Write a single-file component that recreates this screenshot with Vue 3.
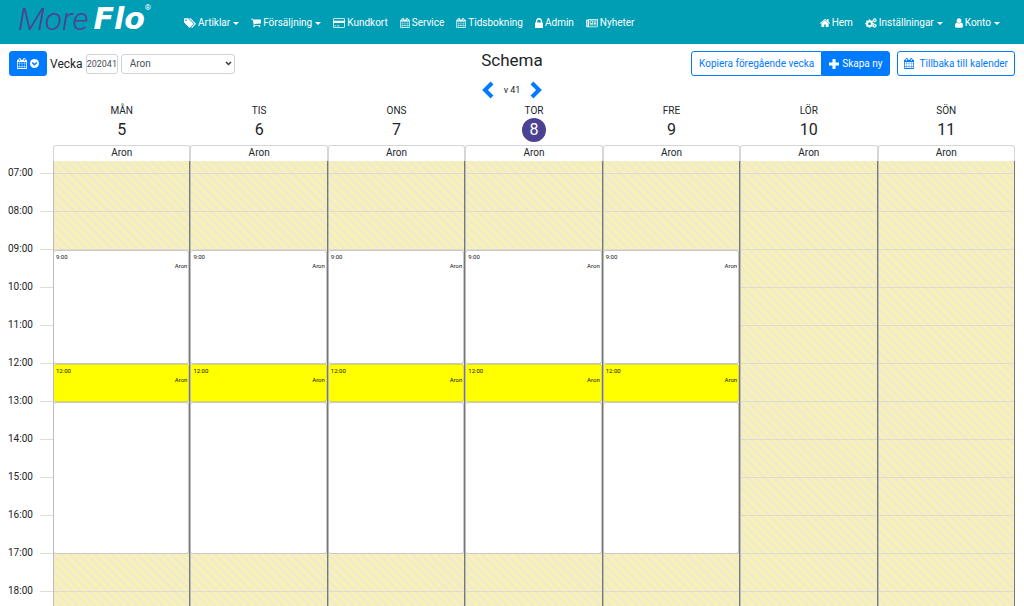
<script setup>
import { ref } from 'vue'

const icons = {
  tags: { box: '0 128 1920 1536', w: 12, d: 'M448 448q0-53-37.5-90.5t-90.5-37.5-90.5 37.5-37.5 90.5 37.5 90.5 90.5 37.5 90.5-37.5 37.5-90.5zm1067 576q0 53-37 90l-491 492q-39 37-91 37-53 0-90-37l-715-716q-38-37-64.5-101t-26.5-117v-416q0-52 38-90t90-38h416q53 0 117 26.5t102 64.5l715 714q37 39 37 91zm384 0q0 53-37 90l-491 492q-39 37-91 37-36 0-59-14t-53-45l470-470q37-37 37-90 0-52-37-91l-715-714q-38-38-102-64.5t-117-26.5h224q53 0 117 26.5t102 64.5l715 714q37 39 37 91z' },
  cart: { box: '64 256 1664 1408', w: 10, d: 'M704 1536q0 52-38 90t-90 38-90-38-38-90 38-90 90-38 90 38 38 90zm896 0q0 52-38 90t-90 38-90-38-38-90 38-90 90-38 90 38 38 90zm128-1088v512q0 24-16.5 42.5t-40.5 21.5l-1044 122q13 60 13 70 0 16-24 64h920q26 0 45 19t19 45-19 45-45 19h-1024q-26 0-45-19t-19-45q0-11 8-31.5t16-36 21.5-40 15.5-29.5l-177-823h-204q-26 0-45-19t-19-45 19-45 45-19h256q16 0 28.5 6.5t19.5 15.5 13 24.5 8 26 5.5 29.5 4.5 26h1201q26 0 45 19t19 45z' },
  card: { box: '0 0 1920 1536', w: 12, d: 'M160 0H1760Q1920 0 1920 160V1376Q1920 1536 1760 1536H160Q0 1536 0 1376V160Q0 0 160 0zM160 128Q128 128 128 160V400H1792V160Q1792 128 1760 128zM128 768V1376Q128 1408 160 1408H1760Q1792 1408 1792 1376V768zM256 1152H512V1280H256zM640 1152H1024V1280H640z' },
  calendar: { box: '64 0 1664 1792', w: 10, d: 'M192 1664h288v-288h-288v288zm352 0h320v-288h-320v288zm-352-352h288v-320h-288v320zm352 0h320v-320h-320v320zm-352-384h288v-288h-288v288zm736 736h320v-288h-320v288zm-384-736h320v-288h-320v288zm768 736h288v-288h-288v288zm-384-352h320v-320h-320v320zm-352-864v-288q0-13-9.5-22.5t-22.5-9.5h-64q-13 0-22.5 9.5t-9.5 22.5v288q0 13 9.5 22.5t22.5 9.5h64q13 0 22.5-9.5t9.5-22.5zm736 864h288v-320h-288v320zm-384-384h320v-288h-320v288zm384 0h288v-288h-288v288zm32-480v-288q0-13-9.5-22.5t-22.5-9.5h-64q-13 0-22.5 9.5t-9.5 22.5v288q0 13 9.5 22.5t22.5 9.5h64q13 0 22.5-9.5t9.5-22.5zm384-64v1280q0 52-38 90t-90 38h-1408q-52 0-90-38t-38-90v-1280q0-52 38-90t90-38h128v-96q0-66 47-113t113-47h64q66 0 113 47t47 113v96h384v-96q0-66 47-113t113-47h64q66 0 113 47t47 113v96h128q52 0 90 38t38 90z' },
  lock: { box: '320 128 1152 1408', w: 8, d: 'M640 768h512v-192q0-106-75-181t-181-75-181 75-75 181v192zm832 96v576q0 40-28 68t-68 28h-960q-40 0-68-28t-28-68v-576q0-40 28-68t68-28h32v-192q0-184 132-316t316-132 316 132 132 316v192h32q40 0 68 28t28 68z' },
  news: { box: '0 0 2048 1408', w: 12, d: 'M384 0H2048V1216Q2048 1408 1856 1408H192Q0 1408 0 1216V128H384zM512 128V1216L490 1280H1856Q1920 1280 1920 1216V128zM128 256V1216Q128 1280 192 1280T256 1216V256zM640 256H1216V832H640zM768 384V704H1088V384zM1312 256H1792V384H1312zM1312 480H1792V608H1312zM1312 704H1792V832H1312zM640 960H1216V1088H640zM1312 960H1792V1088H1312z' },
  home: { box: '90 256 1612 1280', w: 10, d: 'M1472 992v480q0 26-19 45t-45 19h-384v-384h-256v384h-384q-26 0-45-19t-19-45v-480q0-1 .5-3t.5-3l575-474 575 474q1 2 1 6zm223-69l-62 74q-8 9-21 11h-3q-13 0-21-7l-692-577-692 577q-12 8-24 7-13-2-21-11l-62-74q-8-10-7-23.5t11-21.5l719-599q32-26 76-26t76 26l244 204v-195q0-14 9-23t23-9h192q14 0 23 9t9 23v408l219 182q10 8 11 21.5t-7 23.5z' },
  cogs: { box: '-1 0 23 20', w: 12, d: 'M6 3H9L9.5 5L11 5.700L13 4.700L14.500 6.500L13.500 8.300L14 9.500L16 10V12.500L14 13L13.300 14.500L14.400 16.200L12.500 18L10.800 17L9.500 17.500L9 19.500H6.200L5.600 17.500L4.300 17L2.500 18L.6 16.200L1.700 14.400L1 13L-1 12.500V10L1 9.500L1.700 8L.6 6.300L2.500 4.500L4.300 5.600L5.500 5zM7.500 8.300A3 3 0 1 0 7.500 14.300A3 3 0 1 0 7.500 8.300zM17 0L18 1.300L20 .7L20.800 2.500L22 4.500L21 7L19.500 7.600L18 9L16.500 7.600L14.600 7L14 4.500L15 2.500L15.500 1zM18 3A1.500 1.500 0 1 0 18 6A1.500 1.500 0 1 0 18 3zM18 11L19.500 12.400L21.400 13L22 15.500L21 17.500L19.500 18.600L18 20L16.500 18.600L14.600 18L14 15.500L15 13.500L16.500 12.400zM18 14A1.500 1.500 0 1 0 18 17A1.500 1.500 0 1 0 18 14z' },
  user: { box: '256 128 1280 1536', w: 8, d: 'M1536 1399q0 109-62.5 187t-150.5 78h-854q-88 0-150.5-78t-62.5-187q0-85 8.5-160.5t31.5-152 58.500-131 94-89 134.500-34.500q131 128 313 128t313-128q76 0 134.500 34.500t94 89 58.500 131 31.500 152 8.500 160.500zm-256-887q0 159-112.500 271.500t-271.500 112.500-271.500-112.500-112.500-271.500 112.500-271.500 271.500-112.500 271.500 112.500 112.500 271.500z' },
}

const mainLinks = [
  { text: 'Artiklar', icon: 'tags', menu: true },
  { text: 'Försäljning', icon: 'cart', menu: true },
  { text: 'Kundkort', icon: 'card' },
  { text: 'Service', icon: 'calendar' },
  { text: 'Tidsbokning', icon: 'calendar' },
  { text: 'Admin', icon: 'lock' },
  { text: 'Nyheter', icon: 'news' },
]
const userLinks = [
  { text: 'Hem', icon: 'home' },
  { text: 'Inställningar', icon: 'cogs', menu: true },
  { text: 'Konto', icon: 'user', menu: true },
]

const week = ref('202041')
const person = ref('Aron')

const shifts = [
  { time: '9:00', kind: 'work', rows: 'r9' },
  { time: '12:00', kind: 'lunch', rows: 'r12' },
  { time: '', kind: 'work', rows: 'r13' },
]
const days = [
  { name: 'MÅN', date: 5, shifts },
  { name: 'TIS', date: 6, shifts },
  { name: 'ONS', date: 7, shifts },
  { name: 'TOR', date: 8, shifts, today: true },
  { name: 'FRE', date: 9, shifts },
  { name: 'LÖR', date: 10, shifts: [] },
  { name: 'SÖN', date: 11, shifts: [] },
]
const hours = Array.from({ length: 12 }, (_, i) => String(i + 7).padStart(2, '0') + ':00')
</script>

<template>
  <div class="page">
    <header class="topbar">
      <a class="logo" href="#" aria-label="MoreFlo"><span class="more">More</span><span class="flo">Flo</span><sup>®</sup></a>
      <nav class="links">
        <a v-for="l in mainLinks" :key="l.text" href="#">
          <svg :width="icons[l.icon].w" height="10" :viewBox="icons[l.icon].box"><path fill="currentColor" fill-rule="evenodd" :d="icons[l.icon].d" /></svg>
          {{ l.text }}<i v-if="l.menu" class="caret"></i>
        </a>
      </nav>
      <nav class="links right">
        <a v-for="l in userLinks" :key="l.text" href="#">
          <svg :width="icons[l.icon].w" height="10" :viewBox="icons[l.icon].box"><path fill="currentColor" fill-rule="evenodd" :d="icons[l.icon].d" /></svg>
          {{ l.text }}<i v-if="l.menu" class="caret"></i>
        </a>
      </nav>
    </header>

    <section class="toolbar">
      <div class="filters">
        <button class="btn solid pick" type="button" aria-label="Välj vecka">
          <svg width="10" height="11" :viewBox="icons.calendar.box"><path fill="currentColor" fill-rule="evenodd" :d="icons.calendar.d" /></svg>
          <svg width="9" height="9" viewBox="0 0 18 18"><circle cx="9" cy="9" r="9" fill="#fff" /><path d="M4.500 7L9 11.500L13.500 7" fill="none" stroke="#007bff" stroke-width="3" /></svg>
        </button>
        <label class="week-label" for="week">Vecka</label>
        <input id="week" v-model="week" class="field week" type="text" />
        <span class="select-wrap">
          <select v-model="person" class="field" aria-label="Person">
            <option>Aron</option>
          </select>
          <svg class="arrow" width="7" height="5" viewBox="0 0 7 5"><path d="M1 1L3.500 3.500L6 1" fill="none" stroke="#343a40" stroke-width="1.500" /></svg>
        </span>
      </div>
      <div class="heading">
        <h1>Schema</h1>
        <div class="stepper">
          <button type="button" aria-label="Föregående vecka"><svg width="12" height="18" viewBox="0 0 12 18"><path d="M10 2L3 9L10 16" fill="none" stroke="#007bff" stroke-width="4" /></svg></button>
          <span>v 41</span>
          <button type="button" aria-label="Nästa vecka"><svg width="12" height="18" viewBox="0 0 12 18"><path d="M2 2L9 9L2 16" fill="none" stroke="#007bff" stroke-width="4" /></svg></button>
        </div>
      </div>
      <div class="actions">
        <div class="group">
          <button class="btn outline" type="button">Kopiera föregående vecka</button>
          <button class="btn solid" type="button">
            <svg width="10" height="10" viewBox="0 0 10 10"><path d="M5 0V10M0 5H10" stroke="#fff" stroke-width="3" /></svg>
            Skapa ny
          </button>
        </div>
        <a class="btn outline back" href="#">
          <svg width="10" height="11" :viewBox="icons.calendar.box"><path fill="currentColor" fill-rule="evenodd" :d="icons.calendar.d" /></svg>
          Tillbaka till kalender
        </a>
      </div>
    </section>

    <main class="calendar">
      <ol class="hours">
        <li v-for="h in hours" :key="h">{{ h }}</li>
      </ol>
      <section v-for="d in days" :key="d.name" class="day">
        <h2>{{ d.name }}</h2>
        <div class="date"><span :class="{ today: d.today }">{{ d.date }}</span></div>
        <div class="who">Aron</div>
        <div class="slots">
          <article v-for="s in d.shifts" :key="s.rows" class="shift" :class="[s.kind, s.rows]">
            <template v-if="s.time">
              <time>{{ s.time }}</time>
              <p>Aron</p>
            </template>
          </article>
        </div>
      </section>
    </main>
  </div>
</template>

<style>
body {
  margin: 0;
  background: #fff;
}
</style>

<style scoped>
* {
  box-sizing: border-box;
}
.page {
  height: 100vh;
  overflow: hidden;
  display: flex;
  flex-direction: column;
  font-family: Roboto, "Noto Sans", sans-serif;
  font-size: 10px;
  color: #212529;
}
button,
input,
select {
  font: inherit;
  margin: 0;
}
.topbar {
  flex: none;
  display: flex;
  align-items: center;
  height: 44px;
  padding: 0 24px 0 18px;
  background: #009eb5;
}
.logo {
  display: flex;
  width: 166px;
  height: 44px;
  color: #fff;
  font-size: 32px;
  font-style: italic;
  line-height: 38px;
  text-decoration: none;
}
.more {
  color: #4b4594;
  font-weight: 300;
}
.flo {
  margin-left: 5px;
  font-family: "DejaVu Sans", sans-serif;
  font-size: 30px;
  font-weight: 700;
}
.logo sup {
  font-size: 8px;
  font-style: normal;
  line-height: 16px;
}
.links {
  display: flex;
  gap: 12px;
  padding-top: 2px;
}
.links a {
  display: flex;
  align-items: center;
  gap: 2px;
  line-height: 16px;
  color: #fff;
  text-decoration: none;
  white-space: nowrap;
}
.right {
  margin-left: auto;
}
.caret {
  margin-left: 1px;
  border: 3px solid transparent;
  border-top-color: currentColor;
  border-bottom: 0;
}
.toolbar {
  flex: none;
  display: grid;
  grid-template-columns: 1fr auto 1fr;
  align-items: start;
  padding: 7px 9px 0;
}
.filters {
  display: flex;
  align-items: center;
  gap: 3px;
}
.btn {
  display: flex;
  align-items: center;
  justify-content: center;
  gap: 3px;
  height: 25px;
  padding: 0 7px;
  border: 1px solid #007bff;
  border-radius: 3px;
  line-height: 16px;
  text-decoration: none;
  white-space: nowrap;
}
.solid {
  background: #007bff;
  color: #fff;
}
.outline {
  background: #fff;
  color: #007bff;
}
.pick {
  width: 38px;
}
.week-label {
  font-size: 12px;
}
.field {
  height: 20px;
  border: 1px solid #ced4da;
  border-radius: 3px;
  background: #fff;
  color: #495057;
  font-size: 9px;
}
.week {
  width: 32px;
  padding: 0;
  text-align: center;
}
.select-wrap {
  position: relative;
  display: flex;
}
.select-wrap .field {
  width: 114px;
  padding: 0 8px;
  appearance: none;
  font-size: 10px;
}
.arrow {
  position: absolute;
  right: 3px;
  top: 7px;
}
.heading {
  text-align: center;
}
h1 {
  margin: 0;
  font-size: 17px;
  font-weight: 400;
  line-height: 18px;
}
.stepper {
  display: flex;
  align-items: center;
  justify-content: center;
  gap: 10px;
  margin-top: 12px;
  font-size: 9px;
}
.stepper button {
  display: flex;
  padding: 0;
  border: 0;
  background: none;
}
.actions {
  display: flex;
  justify-content: flex-end;
  gap: 7px;
}
.group {
  display: flex;
}
.group .outline {
  border-radius: 3px 0 0 3px;
}
.group .solid {
  padding: 0 6px;
  border-radius: 0 3px 3px 0;
}
.btn.back {
  gap: 6px;
  padding: 0 6px;
}
.calendar {
  flex: 1;
  min-height: 0;
  display: grid;
  grid-template-columns: 53px repeat(7, 1fr);
  padding-right: 9px;
  margin-top: 5px;
}
.hours {
  margin: 57px 0 0;
  padding: 0 0 0 8px;
  list-style: none;
  background: linear-gradient(#dddddd, #dddddd 1px, transparent 1px) 40px 12px / 100% 38px;
  background-repeat: repeat-y;
}
.hours li {
  height: 38px;
  line-height: 24px;
}
.day {
  min-width: 0;
}
h2 {
  margin: 0;
  font-size: 10px;
  font-weight: 400;
  line-height: 14px;
  text-align: center;
}
.date {
  display: flex;
  justify-content: center;
  font-size: 16px;
  line-height: 24px;
  padding-bottom: 3px;
}
.today {
  width: 24px;
  border-radius: 50%;
  background: #4b4294;
  color: #fff;
  text-align: center;
}
.who {
  height: 16px;
  border: 1px solid #d6d6d6;
  border-bottom: 0;
  border-radius: 3px 3px 0 0;
  line-height: 14px;
  text-align: center;
}
.slots {
  display: grid;
  grid-template-rows: 13px repeat(12, 38px);
  border-left: 1px solid #bcbcbc;
  border-right: 1px solid #777777;
  background:
    linear-gradient(#dedcd0, #dedcd0 1px, transparent 1px) 0 12px / 100% 38px,
    repeating-linear-gradient(45deg, #f6f1b4 0 3px, #f2eacb 3px 6px);
}
.shift {
  padding: 1px 1px 0 2px;
  border: 1px solid #c8c8c8;
  border-left: 0;
  border-radius: 3px;
  background: #fff;
  color: #111;
  font-size: 6px;
  line-height: 9px;
}
.shift.lunch {
  background: #ff0;
  border-color: #d8d84a;
}
.shift time {
  display: block;
}
.shift p {
  margin: 0;
  text-align: right;
}
.r9 {
  grid-row: 4 / 7;
}
.r12 {
  grid-row: 7 / 8;
}
.r13 {
  grid-row: 8 / 12;
}
</style>
